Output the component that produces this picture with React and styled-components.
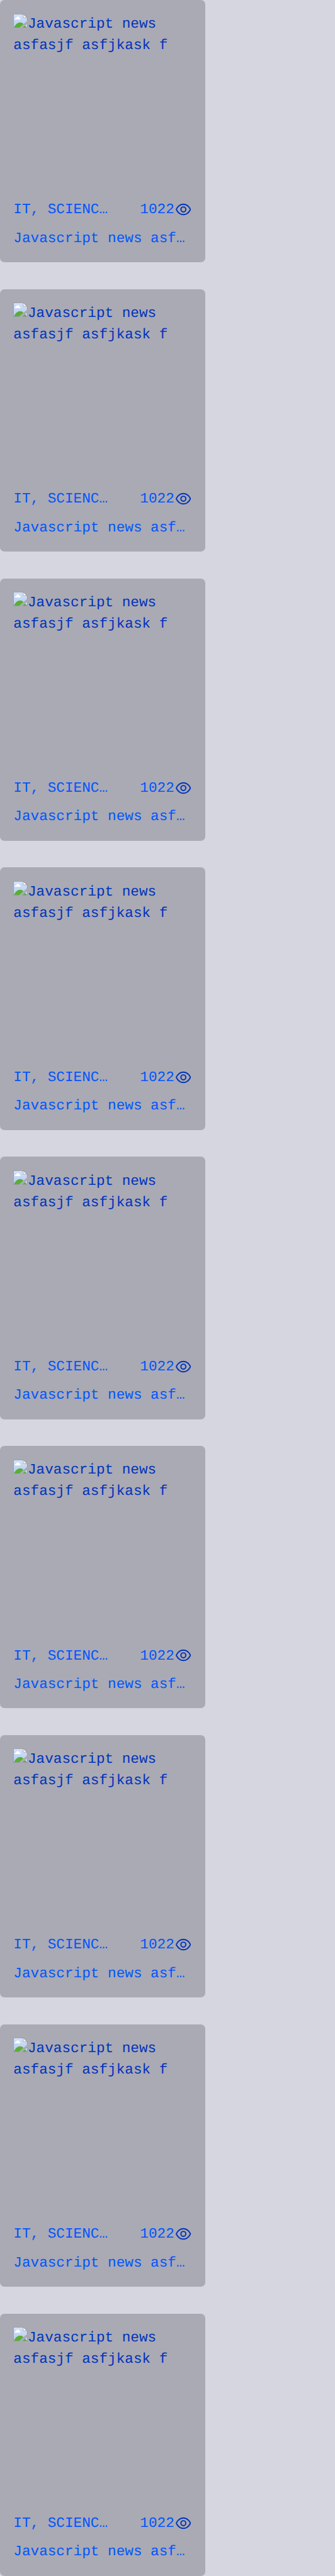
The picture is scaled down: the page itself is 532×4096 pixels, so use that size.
import React from 'react';
import styled, { createGlobalStyle } from 'styled-components';

const u = (n) => `${(n * 4096) / 5772}px`;

const GlobalStyle = createGlobalStyle`
  html, body { margin: 0; padding: 0; background: #d6d6e0; }
  body { overflow: hidden; }
`;

const NewsList = styled.main`
  display: flex;
  flex-direction: column;
  align-items: flex-start;
  gap: ${u(60)};
  font-family: 'Liberation Mono', monospace;
  font-size: ${u(32)};
  line-height: ${u(48)};
  text-rendering: geometricPrecision;
`;

const Card = styled.article`
  box-sizing: border-box;
  width: ${u(460)};
  height: ${u(588)};
  padding: ${u(30)};
  border-radius: ${u(10)};
  background: #aaaab4;
  color: #0033bb;
  display: flex;
  flex-direction: column;
  gap: ${u(16)};
`;

const Cover = styled.div`
  height: ${u(400)};
  overflow: hidden;
`;

const MissingImageIcon = styled.svg`
  width: ${u(32)};
  height: ${u(32)};
  vertical-align: baseline;
`;

const Meta = styled.div`
  display: flex;
  justify-content: space-between;
  align-items: center;
  height: ${u(48)};
`;

const Label = styled.span`
  color: #0055ff;
  white-space: nowrap;
`;

const Views = styled.div`
  display: flex;
  align-items: center;
`;

const EyeIcon = styled.svg`
  display: block;
  width: ${u(40)};
  height: ${u(40)};
  fill: none;
  stroke: currentColor;
  stroke-width: 2.75;
`;

const Title = styled.div`
  margin-top: ${u(16)};
  color: #0055ff;
  white-space: nowrap;
`;

function MissingImage({ id }) {
  return (
    <MissingImageIcon viewBox="0 0 32 32" aria-hidden="true">
      <defs>
        <linearGradient id={id} x1="0" y1="0" x2="0" y2="1">
          <stop offset="0" stopColor="#d3e2fb" />
          <stop offset="1" stopColor="#b5cbed" />
        </linearGradient>
      </defs>
      <path d="M1 1H22V9H31V16L14 31H1Z" fill={`url(#${id})`} />
      <path d="M31 23V31H21Z" fill={`url(#${id})`} />
      <path d="M3.5 12.8C3 10.5 4.5 9 6.5 9C7.3 6.8 9 5.8 11 6C13 6.2 14 7.6 14.2 9C16 9.5 16.3 11 16 12.8Z" fill="#fff" />
      <path d="M1.5 31C5 23.5 10 19.5 15.5 19.5C18.5 19.5 20.8 20.7 22.8 22.8L14 31Z" fill="#5aae35" />
      <path d="M21 31L26.5 26.5L30.5 31Z" fill="#5aae35" />
      <path d="M22 1L31 9H22Z" fill="#fff" />
      <path d="M14 31.5H.5V.5H22.5L31.5 9.3V16M22.2 .8V8.5H31M31.5 22V31.5H20.5" fill="none" stroke="#929292" />
    </MissingImageIcon>
  );
}

function NewsCard({ item }) {
  return (
    <Card>
      <Cover>
        <MissingImage id={`sky-${item.id}`} />
        Javascript news<br />asfasjf asfjkask f
      </Cover>
      <div>
        <Meta>
          <Label>{item.category}</Label>
          <Views>
            <Label>{item.views}</Label>
            <EyeIcon viewBox="0 0 40 40" aria-hidden="true">
              <path d="M4.8 18.4C8.4 11.9 13.6 8.1 20 8.1S31.6 11.9 35.2 18.4Q36 19.8 35.2 21.2C31.6 27.7 26.4 31.5 20 31.5S8.4 27.7 4.8 21.2Q4 19.8 4.8 18.4Z" />
              <circle cx="20" cy="19.8" r="5.5" />
            </EyeIcon>
          </Views>
        </Meta>
        <Title>{item.title}</Title>
      </div>
    </Card>
  );
}

const news = Array.from({ length: 9 }, (_, id) => ({
  id,
  category: 'IT, SCIENC…',
  views: 1022,
  title: 'Javascript news asf…',
}));

export default function App() {
  return (
    <>
      <GlobalStyle />
      <NewsList>
        {news.map((item) => <NewsCard key={item.id} item={item} />)}
      </NewsList>
    </>
  );
}
